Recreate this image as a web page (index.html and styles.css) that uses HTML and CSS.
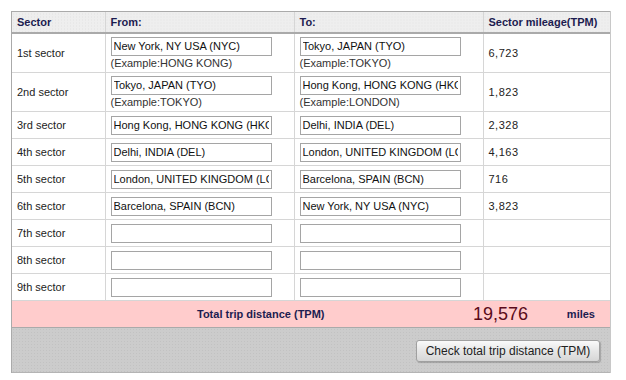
FILE: index.html
```html
<!DOCTYPE html>
<html lang="en">
<head>
<meta charset="UTF-8">
<title>Trip distance</title>
<link rel="stylesheet" href="styles.css">
</head>
<body>
<div class="calc">
    <table class="sectors">
        <colgroup>
            <col class="c-sector">
            <col class="c-from">
            <col class="c-to">
            <col class="c-miles">
        </colgroup>
        <thead>
            <tr>
                <th>Sector</th>
                <th>From:</th>
                <th>To:</th>
                <th>Sector mileage(TPM)</th>
            </tr>
        </thead>
        <tbody>
            <tr class="tall">
                <td>1st sector</td>
                <td><input type="text" value="New York, NY USA (NYC)"><div class="hint">(Example:HONG KONG)</div></td>
                <td><input type="text" value="Tokyo, JAPAN (TYO)"><div class="hint">(Example:TOKYO)</div></td>
                <td class="num">6,723</td>
            </tr>
            <tr class="tall">
                <td>2nd sector</td>
                <td><input type="text" value="Tokyo, JAPAN (TYO)"><div class="hint">(Example:TOKYO)</div></td>
                <td><input type="text" value="Hong Kong, HONG KONG (HKG)"><div class="hint">(Example:LONDON)</div></td>
                <td class="num">1,823</td>
            </tr>
            <tr>
                <td>3rd sector</td>
                <td><input type="text" value="Hong Kong, HONG KONG (HKG)"></td>
                <td><input type="text" value="Delhi, INDIA (DEL)"></td>
                <td class="num">2,328</td>
            </tr>
            <tr>
                <td>4th sector</td>
                <td><input type="text" value="Delhi, INDIA (DEL)"></td>
                <td><input type="text" value="London, UNITED KINGDOM (LON)"></td>
                <td class="num">4,163</td>
            </tr>
            <tr>
                <td>5th sector</td>
                <td><input type="text" value="London, UNITED KINGDOM (LON)"></td>
                <td><input type="text" value="Barcelona, SPAIN (BCN)"></td>
                <td class="num">716</td>
            </tr>
            <tr>
                <td>6th sector</td>
                <td><input type="text" value="Barcelona, SPAIN (BCN)"></td>
                <td><input type="text" value="New York, NY USA (NYC)"></td>
                <td class="num">3,823</td>
            </tr>
            <tr>
                <td>7th sector</td>
                <td><input type="text"></td>
                <td><input type="text"></td>
                <td class="num"></td>
            </tr>
            <tr>
                <td>8th sector</td>
                <td><input type="text"></td>
                <td><input type="text"></td>
                <td class="num"></td>
            </tr>
            <tr>
                <td>9th sector</td>
                <td><input type="text"></td>
                <td><input type="text"></td>
                <td class="num"></td>
            </tr>
        </tbody>
    </table>

    <div class="total">
        <span class="total-label">Total trip distance (TPM)</span>
        <span class="total-num">19,576</span>
        <span class="total-unit">miles</span>
    </div>

    <div class="actions">
        <button type="button" class="btn">Check total trip distance (TPM)</button>
    </div>
</div>
</body>
</html>
```

FILE: styles.css
```css
/* trip distance calculator */
body {
    margin: 0;
    padding: 11px 0 0 11px;
    background: #fff;
    font-family: "Liberation Sans", Arial, sans-serif;
    font-size: 11px;
    color: #222;
}

.calc {
    width: 600px;
    border-left: 1px solid #aaa;
    border-right: 1px solid #c8c8c8;
    box-sizing: border-box;
}

.sectors {
    width: 100%;
    border-collapse: collapse;
    table-layout: fixed;
}

.c-sector { width: 93px; }
.c-from { width: 189px; }
.c-to { width: 189px; }
.c-miles { width: auto; }

.sectors th {
    height: 20px;
    padding: 0 5px;
    text-align: left;
    font-size: 11px;
    font-weight: bold;
    color: #1c1c50;
    background-color: #eeeeee;
    background-image: radial-gradient(#e2e2e2 0.6px, transparent 0.8px);
    background-size: 3px 3px;
    border-top: 1px solid #aaa;
    border-bottom: 2px solid #aaa;
    border-left: 1px solid #d6d6d6;
}

.sectors th:first-child {
    border-left: none;
}

.sectors td {
    height: 26px;
    padding: 0 5px;
    border-bottom: 1px solid #d6d6d6;
    border-left: 1px solid #d6d6d6;
    vertical-align: middle;
}

.sectors td:first-child {
    border-left: none;
}

.sectors tr.tall td {
    height: 38px;
}

.sectors input {
    display: block;
    width: 161px;
    height: 19px;
    box-sizing: border-box;
    margin: 0;
    padding: 0 2px;
    border: 1px solid #a5a5a5;
    font-family: "Liberation Sans", Arial, sans-serif;
    font-size: 11px;
    color: #111;
}

.hint {
    line-height: 14px;
    color: #333;
}

.num {
    color: #222;
    letter-spacing: 0.5px;
}

.total {
    display: grid;
    grid-template-columns: 428px 88px 1fr;
    align-items: center;
    height: 26px;
    background: #ffcccc;
    border-bottom: 1px solid #aaa;
}

.total-label {
    padding-left: 185px;
    font-weight: bold;
    font-size: 11px;
    color: #1c1c50;
}

.total-num {
    text-align: right;
    font-size: 18px;
    color: #5a0a1a;
}

.total-unit {
    text-align: right;
    padding-right: 15px;
    font-weight: bold;
    font-size: 11px;
    color: #1c1c50;
}

.actions {
    display: flex;
    justify-content: flex-end;
    height: 45px;
    padding: 12px 10px 0 0;
    box-sizing: border-box;
    background-color: #cccccc;
    background-image: radial-gradient(#c2c2c2 0.6px, transparent 0.8px);
    background-size: 3px 3px;
    border-bottom: 1px solid #b4b4b4;
}

.btn {
    width: 184px;
    height: 22px;
    padding: 0;
    border: 1px solid #a0a0a0;
    border-radius: 3px;
    background: linear-gradient(#fafafa, #e6e6e6 50%, #d6d6d6);
    box-shadow: 1px 1px 1px rgba(0, 0, 0, 0.2);
    font-family: "Liberation Sans", Arial, sans-serif;
    font-size: 12px;
    color: #222;
}
```
